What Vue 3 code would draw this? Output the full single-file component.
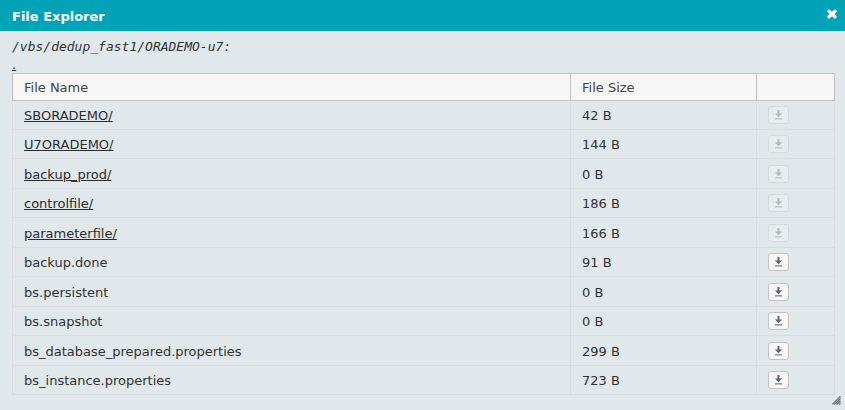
<script setup>
const files = [
  { name: 'SBORADEMO/', size: '42 B', folder: true },
  { name: 'U7ORADEMO/', size: '144 B', folder: true },
  { name: 'backup_prod/', size: '0 B', folder: true },
  { name: 'controlfile/', size: '186 B', folder: true },
  { name: 'parameterfile/', size: '166 B', folder: true },
  { name: 'backup.done', size: '91 B' },
  { name: 'bs.persistent', size: '0 B' },
  { name: 'bs.snapshot', size: '0 B' },
  { name: 'bs_database_prepared.properties', size: '299 B' },
  { name: 'bs_instance.properties', size: '723 B' },
]
</script>

<template>
  <section class="dialog" role="dialog" aria-labelledby="dialog-title">
    <header class="titlebar">
      <h1 id="dialog-title">File Explorer</h1>
      <button class="close" type="button" aria-label="Close">
        <svg width="12" height="12" viewBox="0 0 12 12" aria-hidden="true">
          <path d="M3 3.2 9 8.8M9 3.2 3 8.8" stroke="#fff" stroke-width="3.3" stroke-linecap="round" />
        </svg>
      </button>
    </header>
    <div class="content">
      <p class="path">/vbs/dedup_fast1/ORADEMO-u7:</p>
      <a class="current" href="#">.</a>
      <table>
        <colgroup>
          <col />
          <col class="size-col" />
          <col class="action-col" />
        </colgroup>
        <thead>
          <tr>
            <th scope="col">File Name</th>
            <th scope="col">File Size</th>
            <th></th>
          </tr>
        </thead>
        <tbody>
          <tr v-for="file in files" :key="file.name">
            <td>
              <a v-if="file.folder" href="#">{{ file.name }}</a>
              <template v-else>{{ file.name }}</template>
            </td>
            <td>{{ file.size }}</td>
            <td class="action">
              <button class="download" type="button" :disabled="file.folder" :aria-label="'Download ' + file.name">
                <svg width="9" height="10" viewBox="0 0 9 10" aria-hidden="true">
                  <path d="M3.5 0h2v3.5H8.2L4.5 7.2.8 3.5h2.7z" fill="#666" />
                  <path d="M1 8h7v1.6H1z" fill="#999" />
                </svg>
              </button>
            </td>
          </tr>
        </tbody>
      </table>
    </div>
    <svg class="grip" width="9" height="9" viewBox="0 0 9 9" aria-hidden="true">
      <path d="M0 8.5 8.5 0V8.5z" fill="#999" />
      <path d="M0 8.5 8.5 0M2.5 8.5 8.5 2.5M5 8.5 8.5 5M7.5 8.5l1-1" stroke="#666" stroke-width="1" />
    </svg>
  </section>
</template>

<style>
body {
  background: #e0e8eb;
}
</style>

<style scoped>
.dialog {
  position: relative;
  box-sizing: border-box;
  min-height: 100vh;
  background: #e0e8eb;
  color: #333;
  font: 13px/18px "DejaVu Sans", Verdana, sans-serif;
}

.titlebar {
  display: flex;
  align-items: flex-start;
  justify-content: space-between;
  padding: 8px 7px 5px 12px;
  background: #00a3b6;
  color: #fff;
}

h1 {
  margin: 0;
  font-size: 13px;
  font-weight: bold;
}

button {
  display: flex;
  align-items: center;
  justify-content: center;
  padding: 0;
}

.close {
  border: 0;
  background: none;
}

.content {
  padding: 7px 10px 15px 12px;
}

.path {
  margin: 0;
  font: italic 13px/18px "DejaVu Sans Mono", monospace;
}

a {
  color: #2c2c2c;
}

.current {
  display: block;
  width: max-content;
  line-height: 17px;
}

table {
  width: 100%;
  border-collapse: collapse;
  table-layout: fixed;
}

.size-col {
  width: 186px;
}

.action-col {
  width: 78px;
}

th,
td {
  padding: 2px 11px 0;
  border: 1px solid #dcdcde;
  text-align: left;
}

th {
  height: 24px;
  border-color: #c3c3c5;
  background: #f6f6f6;
  color: #444;
  font-weight: normal;
}

.action {
  padding-bottom: 2px;
}

tbody tr {
  height: 29px;
}

tbody tr:nth-child(2n + 3) {
  height: 30px;
}

.download {
  box-sizing: border-box;
  width: 21px;
  height: 18px;
  border: 1px solid #c3c3c5;
  border-radius: 3px;
  background: #f6f6f6;
}

.download:disabled {
  opacity: 0.35;
}

.grip {
  position: absolute;
  right: 4px;
  bottom: 5px;
}
</style>
